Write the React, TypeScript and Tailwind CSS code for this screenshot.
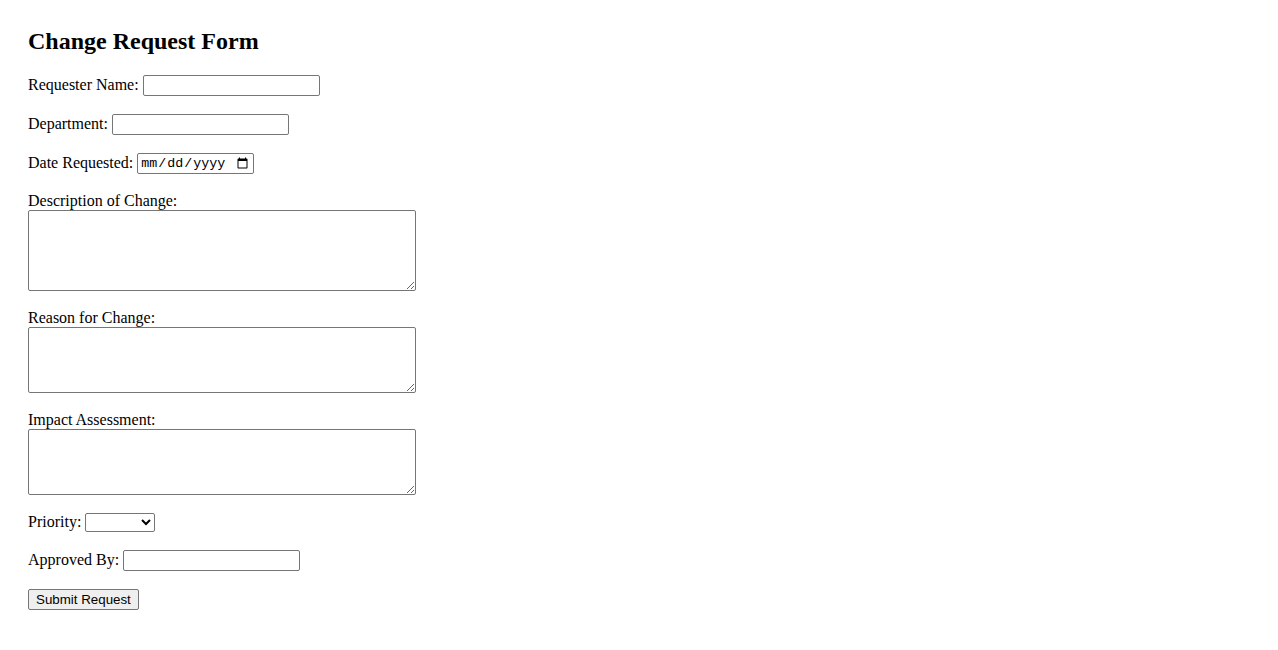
import { useState } from 'react';

const inputCls =
  'h-[21px] w-[177px] rounded-[2px] border border-[#767676] bg-white px-[2px] py-[1px] text-[13.33px] font-["Liberation_Sans",Arial,sans-serif]';
const areaCls =
  'block w-[388px] rounded-[2px] border border-[#767676] bg-white px-[2px] py-[2px] text-[13.33px] font-["Liberation_Mono",monospace]';
const rowLabel = 'mb-[2px]';

export default function App() {
  const [priority, setPriority] = useState('');

  return (
    <div className="min-h-screen bg-white px-[28px] pt-[27px] font-['Liberation_Serif',serif] text-[16px] text-black">
      <h2 className="h-[28px] text-[24px] font-bold leading-[28px]">Change Request Form</h2>

      <form onSubmit={(e) => e.preventDefault()} className="mt-[20px] flex flex-col items-start">
        <div className="flex h-[21px] items-center gap-[4px]">
          <label htmlFor="name" className={rowLabel}>Requester Name:</label>
          <input id="name" type="text" className={inputCls} />
        </div>

        <div className="mt-[18px] flex h-[21px] items-center gap-[4px]">
          <label htmlFor="dept" className={rowLabel}>Department:</label>
          <input id="dept" type="text" className={inputCls} />
        </div>

        <div className="mt-[18px] flex h-[21px] items-center gap-[4px]">
          <label htmlFor="date" className={rowLabel}>Date Requested:</label>
          <input
            id="date"
            type="date"
            className="h-[21px] w-[117px] rounded-[2px] border border-[#767676] bg-white px-[2px] py-[1px] font-['Liberation_Mono',monospace] text-[13.33px]"
          />
        </div>

        <label htmlFor="desc" className="mt-[18px] block h-[18px] leading-[18px]">Description of Change:</label>
        <textarea id="desc" className={areaCls + ' h-[81px]'} />

        <label htmlFor="reason" className="mt-[18px] block h-[18px] leading-[18px]">Reason for Change:</label>
        <textarea id="reason" className={areaCls + ' h-[66px]'} />

        <label htmlFor="impact" className="mt-[18px] block h-[18px] leading-[18px]">Impact Assessment:</label>
        <textarea id="impact" className={areaCls + ' h-[66px]'} />

        <div className="mt-[18px] flex h-[19px] items-center gap-[4px]">
          <label htmlFor="priority" className={rowLabel}>Priority:</label>
          <select
            id="priority"
            value={priority}
            onChange={(e) => setPriority(e.target.value)}
            className="h-[19px] w-[70px] rounded-[2px] border border-[#767676] bg-white font-['Liberation_Sans',Arial,sans-serif] text-[13.33px]"
          >
            <option value=""></option>
            <option value="low">Low</option>
            <option value="medium">Medium</option>
            <option value="high">High</option>
          </select>
        </div>

        <div className="mt-[18px] flex h-[21px] items-center gap-[4px]">
          <label htmlFor="approved" className={rowLabel}>Approved By:</label>
          <input id="approved" type="text" className={inputCls} />
        </div>

        <button
          type="submit"
          className="mt-[18px] h-[21px] rounded-[2px] border border-[#767676] bg-[#efefef] px-[7px] font-['Liberation_Sans',Arial,sans-serif] text-[13.33px] leading-[17px]"
        >
          Submit Request
        </button>
      </form>
    </div>
  );
}
